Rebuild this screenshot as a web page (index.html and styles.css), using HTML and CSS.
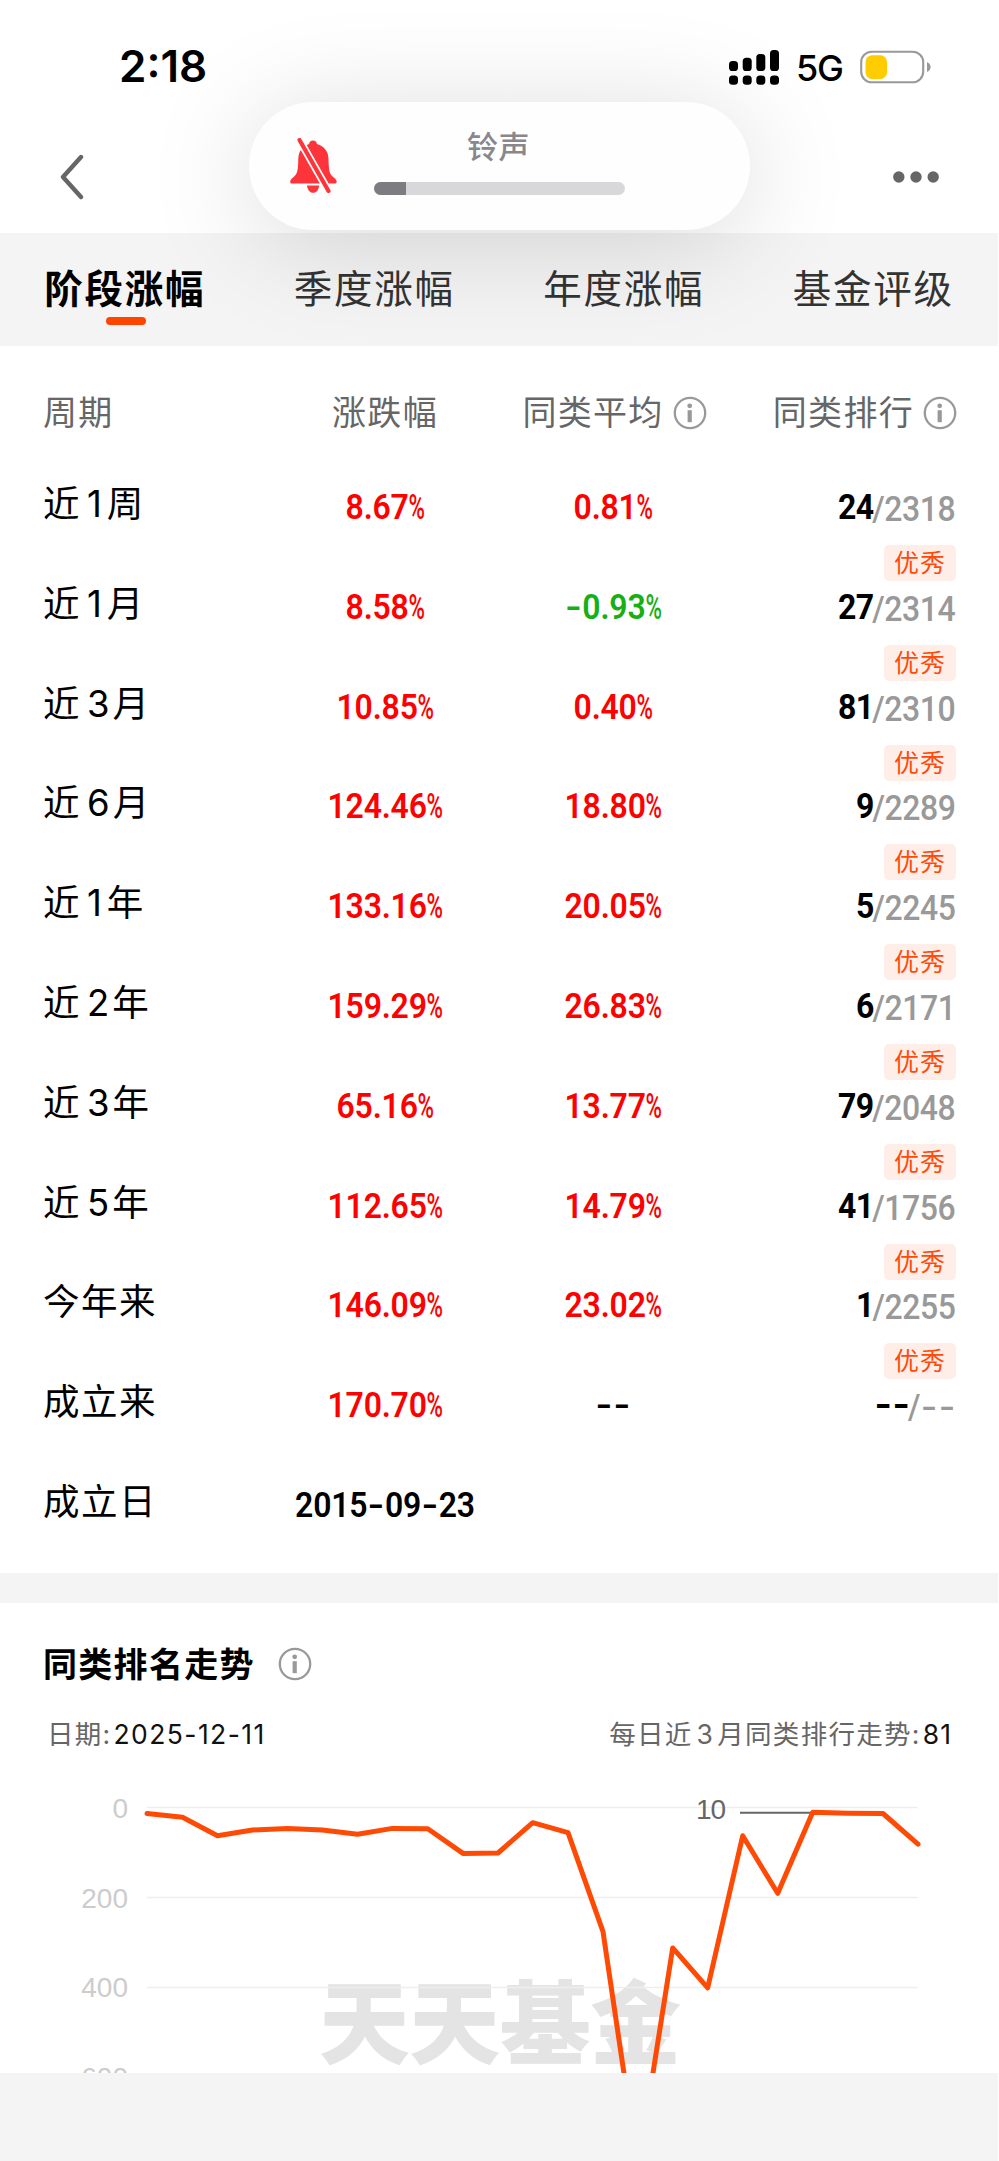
FILE: index.html
```html
<!DOCTYPE html>
<html lang="zh-CN">
<head>
<meta charset="utf-8">
<title>阶段涨幅</title>
<link rel="stylesheet" href="styles.css">
</head>
<body>
<svg class="defs" width="0" height="0" aria-hidden="true">
  <symbol id="info" viewBox="0 0 34 34">
    <circle cx="17" cy="17" r="15.2" fill="none" stroke="#999" stroke-width="2.3"/>
    <circle cx="16.7" cy="9.8" r="2.4" fill="#999"/>
    <rect x="14.6" y="14.2" width="4.2" height="12" fill="#999"/>
  </symbol>
</svg>
<div class="screen">
  <header class="top">
    <div class="status">
      <span class="time">2:18</span>
      <div class="status-right">
        <svg width="51" height="36" viewBox="0 0 51 36">
          <rect x="0" y="12" width="9" height="10" rx="3.6"/>
          <rect x="13.7" y="8.7" width="9" height="13.3" rx="3.6"/>
          <rect x="27.3" y="5" width="9" height="17" rx="3.6"/>
          <rect x="41" y="1" width="9" height="21" rx="3.6"/>
          <rect x="0" y="26.5" width="9" height="9.3" rx="3.6"/>
          <rect x="13.7" y="26.5" width="9" height="9.3" rx="3.6"/>
          <rect x="27.3" y="26.5" width="9" height="9.3" rx="3.6"/>
          <rect x="41" y="26.5" width="9" height="9.3" rx="3.6"/>
        </svg>
        <span class="net">5G</span>
        <svg width="71" height="34" viewBox="0 0 71 34">
          <rect x="1.2" y="1.7" width="62" height="30.6" rx="10.5" fill="#fff" stroke="#999" stroke-width="2.1"/>
          <rect x="5.5" y="5.3" width="21.5" height="23.6" rx="6.5" fill="#fc0"/>
          <path d="M67 12q3.6 1.6 3.6 5t-3.6 5z" fill="#999"/>
        </svg>
      </div>
    </div>
    <nav class="navbar">
      <svg width="24" height="46" viewBox="0 0 24 46"><path d="M21 3 3 23 21 43" fill="none" stroke="#666" stroke-width="4.4" stroke-linecap="round" stroke-linejoin="round"/></svg>
      <svg width="46" height="12" viewBox="0 0 46 12" fill="#666"><circle cx="5.8" cy="6" r="5.7"/><circle cx="23" cy="6" r="5.7"/><circle cx="40.2" cy="6" r="5.7"/></svg>
    </nav>
  </header>

  <div class="tabs">
    <div class="tab active">阶段涨幅</div>
    <div class="tab">季度涨幅</div>
    <div class="tab">年度涨幅</div>
    <div class="tab">基金评级</div>
  </div>

  <section class="perf">
    <div class="row head">
      <div>周期</div>
      <div class="mid">涨跌幅</div>
      <div class="mid avg">同类平均<svg class="info"><use href="#info"/></svg></div>
      <div class="end">同类排行<svg class="info"><use href="#info"/></svg></div>
    </div>
    <div class="row"><div class="label">近<i class="one">1</i>周</div><div class="num up">8.67<b class="pct">%</b></div><div class="num up">0.81<b class="pct">%</b></div><div class="rank"><div class="pos"><b>24</b><span>/2318</span></div><div class="badge">优秀</div></div></div>
    <div class="row"><div class="label">近<i class="one">1</i>月</div><div class="num up">8.58<b class="pct">%</b></div><div class="num down"><b class="dash">-</b>0.93<b class="pct">%</b></div><div class="rank"><div class="pos"><b>27</b><span>/2314</span></div><div class="badge">优秀</div></div></div>
    <div class="row"><div class="label">近<i>3</i>月</div><div class="num up">10.85<b class="pct">%</b></div><div class="num up">0.40<b class="pct">%</b></div><div class="rank"><div class="pos"><b>81</b><span>/2310</span></div><div class="badge">优秀</div></div></div>
    <div class="row"><div class="label">近<i>6</i>月</div><div class="num up">124.46<b class="pct">%</b></div><div class="num up">18.80<b class="pct">%</b></div><div class="rank"><div class="pos"><b>9</b><span>/2289</span></div><div class="badge">优秀</div></div></div>
    <div class="row"><div class="label">近<i class="one">1</i>年</div><div class="num up">133.16<b class="pct">%</b></div><div class="num up">20.05<b class="pct">%</b></div><div class="rank"><div class="pos"><b>5</b><span>/2245</span></div><div class="badge">优秀</div></div></div>
    <div class="row"><div class="label">近<i>2</i>年</div><div class="num up">159.29<b class="pct">%</b></div><div class="num up">26.83<b class="pct">%</b></div><div class="rank"><div class="pos"><b>6</b><span>/2171</span></div><div class="badge">优秀</div></div></div>
    <div class="row"><div class="label">近<i>3</i>年</div><div class="num up">65.16<b class="pct">%</b></div><div class="num up">13.77<b class="pct">%</b></div><div class="rank"><div class="pos"><b>79</b><span>/2048</span></div><div class="badge">优秀</div></div></div>
    <div class="row"><div class="label">近<i>5</i>年</div><div class="num up">112.65<b class="pct">%</b></div><div class="num up">14.79<b class="pct">%</b></div><div class="rank"><div class="pos"><b>41</b><span>/1756</span></div><div class="badge">优秀</div></div></div>
    <div class="row"><div class="label">今年来</div><div class="num up">146.09<b class="pct">%</b></div><div class="num up">23.02<b class="pct">%</b></div><div class="rank"><div class="pos"><b>1</b><span>/2255</span></div><div class="badge">优秀</div></div></div>
    <div class="row"><div class="label">成立来</div><div class="num up">170.70<b class="pct">%</b></div><div class="num"><b class="dash">-</b><b class="dash">-</b></div><div class="rank"><div class="pos"><b><b class="dash">-</b><b class="dash">-</b></b><span>/<b class="dash">-</b><b class="dash">-</b></span></div></div></div>
    <div class="row"><div class="label">成立日</div><div class="num">2015<b class="dash">-</b>09<b class="dash">-</b>23</div></div>
  </section>

  <section class="trend">
    <div class="trend-title"><h2>同类排名走势</h2><svg class="info"><use href="#info"/></svg></div>
    <div class="trend-meta">
      <div class="date">日期:<b>2025-12-11</b></div>
      <div class="today">每日近<i>3</i>月同类排行走势:<b>81</b></div>
    </div>
    <svg class="chart" width="998" height="303" viewBox="0 1770 998 303">
      <text class="watermark" x="319" y="2057" textLength="362">天天基金</text>
      <path d="M147 1807.500H918M147 1897.500H918M147 1987.500H918" stroke="#eee" stroke-width="1.3"/>
      <g class="axis">
        <text x="128" y="1818">0</text>
        <text x="128" y="1907.500">200</text>
        <text x="128" y="1997">400</text>
        <text x="128" y="2087">600</text>
      </g>
      <path d="M740 1812.700H812" stroke="#666" stroke-width="2"/>
      <text class="peak" x="696" y="1818.500">10</text>
      <polyline fill="none" stroke="#ff4a05" stroke-width="5" stroke-linejoin="round" stroke-linecap="round" points="147,1813.5 182.5,1817.3 217.5,1835.7 252.5,1830 287.5,1828.4 322.5,1830 357.5,1834.2 392.5,1828.4 427.8,1828.8 463,1853.4 498,1853 532.7,1822.7 568,1832.7 603,1931.7 638,2168 672.7,1947.9 707.7,1987.8 742.7,1835.7 777.7,1893.3 812.7,1812.3 847.7,1813.2 883,1813.5 918,1844.2"/>
    </svg>
  </section>
</div>

<div class="volume">
  <svg width="47" height="56" viewBox="0 0 47 56">
    <path fill="#fd353b" d="M23 2.500c2.400 0 3.700 1.500 3.900 3.400C34.600 8 38.500 14 38.500 21c.3 10 .3 15 5.200 18.500 2 1.500 3 3 3 4.200 0 1.300-.8 1.800-2 1.800H2.300C.9 45.500.2 45 .2 43.700c0-1.200 1-2.700 2.900-4.200C8 36 8 31 8.300 21c.1-7.500 4-13 10.800-15.100.2-1.900 1.500-3.400 3.900-3.400zM17 47.500h12.200c-.3 4-2.700 7.300-6.100 7.300s-5.800-3.300-6.100-7.300z"/>
    <path d="M7.800-1 41 57.500" stroke="#fff" stroke-width="7.600"/>
    <path d="M9.500 2 38.500 53" stroke="#fd353b" stroke-width="4.200" stroke-linecap="round"/>
  </svg>
  <div class="volume-body">
    <span>铃声</span>
    <div class="bar"><div class="fill"></div></div>
  </div>
</div>
</body>
</html>
```

FILE: styles.css
```css
* { box-sizing: border-box; }
body {
  margin: 0;
  background: #fff;
  font-family: Inter, "Noto Sans CJK SC", sans-serif;
  color: #000;
}
i, b { font-style: normal; font-weight: inherit; }
svg { display: block; flex: none; }
.defs { position: absolute; }
.screen {
  width: 998px;
  height: 2161px;
  background: #f4f4f4;
  overflow: hidden;
}

/* status bar and navigation */
.top { height: 233px; background: #fff; }
.status {
  height: 133px;
  padding: 0 67px 0 119px;
  display: flex;
  justify-content: space-between;
  align-items: center;
}
.time { font-size: 44px; font-weight: 600; margin-bottom: 1px; }
.status-right { display: flex; align-items: center; }
.net { margin: 2px 16px 0 16px; width: 48px; font-size: 36px; font-weight: 500; letter-spacing: -1.2px; }
.navbar {
  height: 87px;
  padding: 0 59px 0 60px;
  display: flex;
  justify-content: space-between;
  align-items: center;
}

/* volume overlay */
.volume {
  position: absolute;
  left: 249px;
  top: 102px;
  width: 501px;
  height: 128px;
  padding: 0 125px 0 41px;
  display: flex;
  align-items: center;
  gap: 37px;
  border-radius: 64px;
  background: #fefefe;
  box-shadow: 0 12px 110px rgba(0, 0, 0, .15);
}
.volume-body { display: flex; flex-direction: column; align-items: center; width: 251px; flex: none; padding-bottom: 13px; }
.volume-body span { font-size: 31px; line-height: 44px; letter-spacing: .6px; margin-right: 2px; color: #88888c; font-weight: 500; }
.bar { width: 251px; height: 13px; margin-top: 13px; border-radius: 7px; background: #d8d8da; overflow: hidden; }
.fill { width: 32px; height: 13px; background: #7d7c81; }

/* tabs */
.tabs { display: grid; grid-template-columns: repeat(4, 249.5px); height: 113px; }
.tab {
  position: relative;
  line-height: 112px;
  text-align: center;
  font-size: 38.5px;
  letter-spacing: 1.7px;
  color: #333;
}
.tab.active { color: #000; font-weight: 700; }
.tab.active::after {
  content: "";
  position: absolute;
  left: 106px;
  top: 84px;
  width: 40px;
  height: 8px;
  border-radius: 4px;
  background: #ff4400;
}

/* performance table */
.perf { height: 1227px; padding: 0 0 0 43px; background: #fff; overflow: hidden; }
.row { display: grid; grid-template-columns: repeat(4, 228px); height: 99.8px; }
.row.head { height: 140px; line-height: 134px; font-size: 34px; letter-spacing: 1.3px; color: #666; }
.head .mid { text-align: center; }
.head .avg, .head .end { display: flex; align-items: center; justify-content: center; height: 134px; }
.head .avg { padding-left: 3px; }
.head .end { justify-content: flex-end; margin-right: -2px; }
.info { width: 34px; height: 34px; margin: 0 0 0 9px; }
.label { font-size: 36.5px; line-height: 36px; letter-spacing: 1.5px; white-space: nowrap; }
.label i { margin: 0 3px 0 6px; letter-spacing: 0; }
.label i.one { margin: 0 5px 0 6px; }
.num, .pos { font-family: Roboto, "Noto Sans CJK SC", sans-serif; font-size: 35.5px; line-height: 40px; letter-spacing: -.2px; white-space: nowrap; }
.num { padding-top: 1px; font-weight: 600; text-align: center; transform: scaleX(.9); }
.up { color: #fe0000; }
.down { color: #16b016; }
.pct { display: inline-block; width: 17.5px; text-align: left; font-weight: 500; transform: scaleX(.7); transform-origin: left; }
.dash { display: inline-block; width: 19.6px; text-align: center; transform: scaleX(1.4); }
.rank { display: flex; flex-direction: column; align-items: flex-end; padding-top: 1px; }
.pos { display: flex; transform: scaleX(.9); transform-origin: right; font-weight: 700; }
.pos > b { margin-right: -1.5px; letter-spacing: -.6px; }
.pos > span { color: #999; font-weight: 500; letter-spacing: -.5px; padding-top: 2px; }
.badge {
  width: 72px;
  height: 36px;
  margin: 16px -1px 0 0;
  border-radius: 5px;
  background: #ffeee8;
  color: #ff4a0a;
  font-size: 25px;
  letter-spacing: 1px;
  line-height: 36px;
  text-align: center;
}

/* ranking trend */
.trend { margin-top: 30px; height: 470px; background: #fff; overflow: hidden; }
.trend-title {
  display: flex;
  align-items: center;
  height: 117px;
  padding: 2px 0 0 43px;
}
.trend-title h2 { margin: 0; font-size: 34px; letter-spacing: 1.3px; font-weight: 700; }
.trend-title .info { margin: 2px 0 0 23px; }
.trend-meta {
  display: flex;
  justify-content: space-between;
  height: 50px;
  line-height: 28px;
  padding: 0 46px 0 47px;
  font-size: 26.5px;
  letter-spacing: 1.3px;
  color: #666;
}
.trend-meta b { color: #111; letter-spacing: 1px; margin-left: 2px; }
.date b { letter-spacing: 1.4px; }
.trend-meta i { margin: 0 3px 0 4px; }
.axis { font-family: "Liberation Sans", sans-serif; font-size: 28px; fill: #ccc; text-anchor: end; }
.peak { font-family: "Liberation Sans", sans-serif; font-size: 28px; letter-spacing: -1px; fill: #666; }
.watermark { font-size: 91px; font-weight: 900; fill: #e4e4e4; }
```
